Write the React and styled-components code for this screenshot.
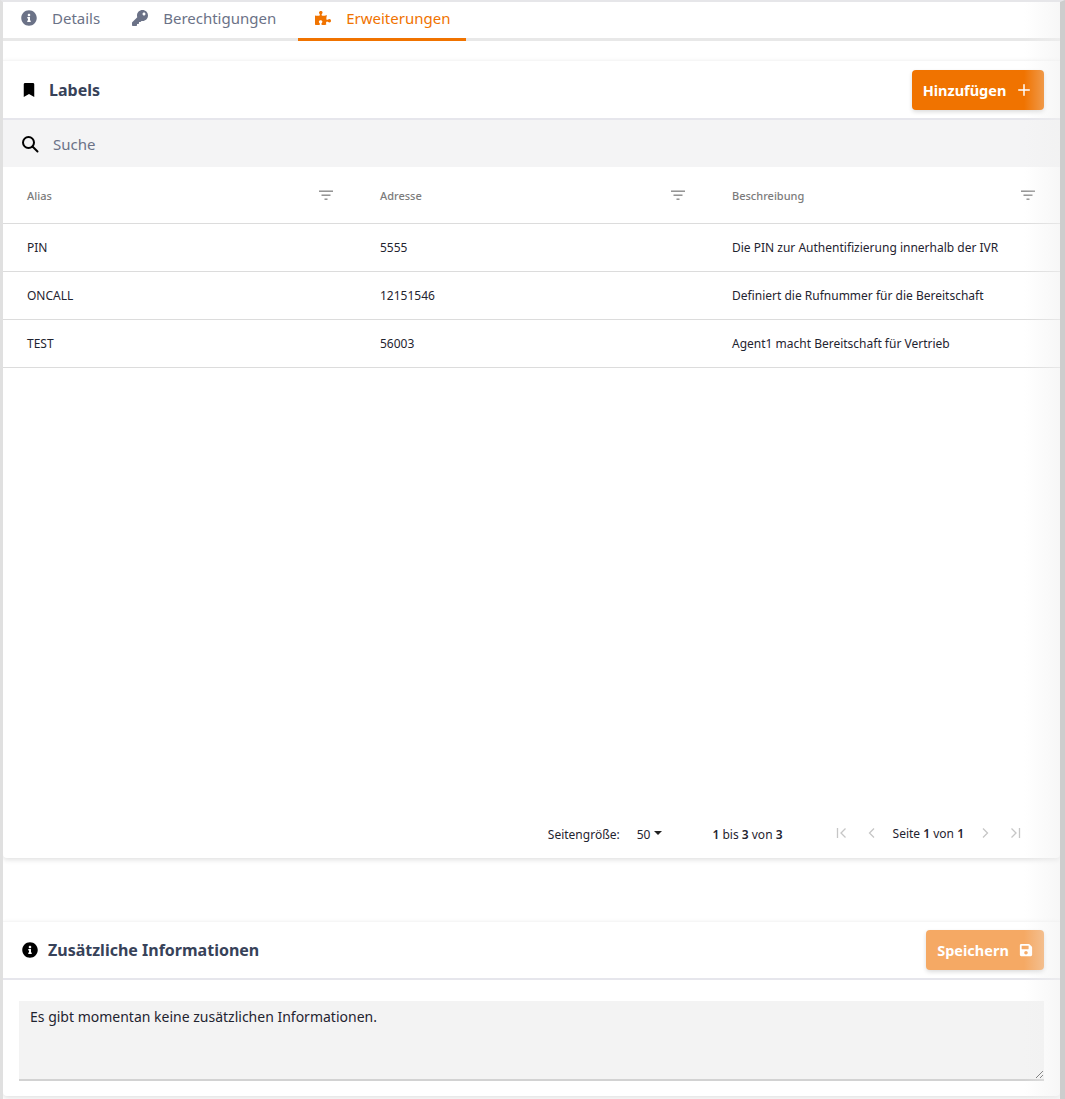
import React from 'react';
import styled, { createGlobalStyle } from 'styled-components';
import { FaInfoCircle, FaKey, FaPuzzlePiece, FaBookmark, FaSave } from 'react-icons/fa';
import { Plus } from 'lucide-react';

const GlobalStyle = createGlobalStyle`
    html, body {
        margin: 0;
        padding: 0;
        height: 1099px;
        overflow: hidden;
        background: #e6e6e9;
    }
    * { box-sizing: border-box; }
    body {
        font-family: "Noto Sans", "Open Sans", sans-serif;
        color: #1f2430;
    }
`;

const orange = '#f07300';

const rows = [
    { alias: 'PIN', address: '5555', text: 'Die PIN zur Authentifizierung innerhalb der IVR' },
    { alias: 'ONCALL', address: '12151546', text: 'Definiert die Rufnummer für die Bereitschaft' },
    { alias: 'TEST', address: '56003', text: 'Agent1 macht Bereitschaft für Vertrieb' },
];

const Page = styled.div`
    position: relative;
    width: 1065px;
    height: 1099px;
    padding: 2px 5px 0 3px;
    background: #fff;
    border-left: 3px solid #e0e0e0;
    border-right: 5px solid #cdcdcd;
    border-top: 2px solid #e6e6e9;
    padding: 0;
    overflow: hidden;
`;

const Fade = styled.div`
    position: absolute;
    top: 0;
    right: 0;
    bottom: 0;
    width: 36px;
    pointer-events: none;
    background: linear-gradient(to right, rgba(240, 240, 240, 0), rgba(240, 240, 240, 0.55));
`;

const Tabs = styled.nav`
    display: flex;
    height: 39px;
    padding-left: 8px;
    border-bottom: 3px solid #e8e8e8;
`;

const Tab = styled.div`
    display: flex;
    align-items: center;
    gap: 15px;
    height: 39px;
    padding: 0 16px 4px ${(p) => (p.$active ? '17px' : '10px')};
    margin-right: ${(p) => (p.$active ? '0' : '6px')};
    font-size: 15px;
    color: ${(p) => (p.$active ? orange : '#6b7287')};
    border-bottom: 3px solid ${(p) => (p.$active ? orange : 'transparent')};
    svg { width: 16px; height: 16px; }
`;

const Card = styled.section`
    display: flex;
    flex-direction: column;
    height: ${(p) => p.$height}px;
    margin-top: ${(p) => p.$top}px;
    border-top: 1px solid #f6f6f6;
    box-shadow: 0 2px 5px rgba(0, 0, 0, 0.12);
    background: #fff;
    border-radius: 0 0 4px 4px;
`;

const CardHeader = styled.header`
    display: flex;
    align-items: center;
    justify-content: space-between;
    flex: 0 0 ${(p) => p.$height}px;
    padding: 0 16px 0 19px;
    border-bottom: 2px solid #e6e6ec;
`;

const Title = styled.h2`
    display: flex;
    align-items: center;
    gap: ${(p) => p.$gap}px;
    margin: 0;
    font-size: 16px;
    font-weight: 700;
    color: #374259;
    svg { color: #000; flex: none; }
`;

const ActionButton = styled.button`
    display: flex;
    align-items: center;
    justify-content: center;
    gap: ${(p) => p.$gap}px;
    width: ${(p) => p.$width}px;
    height: 40px;
    padding: 0;
    border: 0;
    border-radius: 4px;
    font-family: inherit;
    font-size: 14.5px;
    font-weight: 700;
    color: #fff;
    background: ${(p) => (p.$muted ? '#f5a964' : orange)};
    box-shadow: 0 2px 4px rgba(0, 0, 0, 0.14);
`;

const SearchBar = styled.div`
    display: flex;
    align-items: center;
    gap: 14px;
    flex: 0 0 47px;
    padding: 0 0 0 18px;
    font-size: 15px;
    color: #6b7287;
    background: #f4f4f5;
`;

const Columns = styled.div`
    display: grid;
    grid-template-columns: 353px 352px 1fr;
`;

const HeaderRow = styled(Columns)`
    flex: 0 0 57px;
    align-items: center;
    padding-top: 1px;
    border-bottom: 1px solid #dcdcdc;
`;

const RowLine = styled(Columns)`
    flex: 0 0 48px;
    align-items: center;
    font-size: 12px;
    color: #1f2430;
    border-bottom: 1px solid #dcdcdc;
`;

const HeadCell = styled.div`
    display: flex;
    align-items: center;
    justify-content: space-between;
    padding: 0 ${(p) => p.$right}px 0 ${(p) => p.$left}px;
    font-size: 11px;
    font-weight: 500;
    color: #7b7b7b;
`;

const Cell = styled.div`
    padding-left: ${(p) => p.$left}px;
    white-space: nowrap;
`;

const Spacer = styled.div`
    flex: 1;
`;

const Pagination = styled.footer`
    display: flex;
    align-items: center;
    justify-content: flex-end;
    flex: 0 0 48px;
    padding: 0 30px 0 0;
    font-size: 12px;
    color: #1f2430;
`;

const PageSize = styled.span`
    display: flex;
    align-items: center;
    margin-right: 50px;
`;

const SizeValue = styled.span`
    display: flex;
    align-items: center;
    gap: 4px;
    margin-left: 17px;
    &::after {
        content: '';
        border-left: 4px solid transparent;
        border-right: 4px solid transparent;
        border-top: 4px solid #222;
        margin-top: -2px;
    }
`;

const Range = styled.span`
    margin-right: 44px;
`;

const PagerIcon = styled.svg`
    width: 12px;
    height: 12px;
    margin: 0 9px;
    fill: none;
    stroke: #c6c6c6;
    stroke-width: 1.3;
    position: relative;
    top: -1px;
`;

const PageLabel = styled.span`
    margin: -1px 6px 0 6px;
`;

const Strong = styled.span`
    font-weight: 600;
`;

const NotesBody = styled.div`
    padding: 21px 16px 0;
`;

const Notes = styled.textarea`
    display: block;
    width: 100%;
    height: 80px;
    padding: 6px 11px;
    border: 0;
    border-bottom: 2px solid #d2d2d2;
    outline: 0;
    font-family: inherit;
    font-size: 14px;
    color: #1f2430;
    background: #f3f3f3;
`;

const FilterIcon = () => (
    <svg width="14" height="12" viewBox="0 0 14 12" fill="#8a8a8a">
        <rect x="0" y="0.5" width="14" height="1.4" />
        <rect x="2.5" y="4.5" width="9" height="1.4" />
        <rect x="5.5" y="8.5" width="3" height="1.4" />
    </svg>
);

const SearchIcon = () => (
    <svg width="18" height="18" viewBox="0 0 18 18" fill="none" stroke="#000" strokeWidth="2">
        <circle cx="7.5" cy="7.5" r="5.5" />
        <path d="M11.5 11.5L16.5 16.5" strokeLinecap="round" />
    </svg>
);

const FirstIcon = () => (
    <PagerIcon viewBox="0 0 12 12"><path d="M1.5 1v10M9.5 1.5L5 6l4.5 4.5" /></PagerIcon>
);
const PrevIcon = () => (
    <PagerIcon viewBox="0 0 12 12"><path d="M8 1.5L3.5 6 8 10.5" /></PagerIcon>
);
const NextIcon = () => (
    <PagerIcon viewBox="0 0 12 12"><path d="M4 1.5L8.5 6 4 10.5" /></PagerIcon>
);
const LastIcon = () => (
    <PagerIcon viewBox="0 0 12 12"><path d="M10.5 1v10M2.5 1.5L7 6l-4.5 4.5" /></PagerIcon>
);

const App = () => {
    return (<Page>
        <GlobalStyle />
        <Tabs>
            <Tab><FaInfoCircle />Details</Tab>
            <Tab><FaKey />Berechtigungen</Tab>
            <Tab $active><FaPuzzlePiece />Erweiterungen</Tab>
        </Tabs>

        <Card $top={19} $height={798}>
            <CardHeader $height={59}>
                <Title $gap={13}><FaBookmark size={14} />Labels</Title>
                <ActionButton $width={132} $gap={9}>Hinzufügen<Plus size={18} /></ActionButton>
            </CardHeader>
            <SearchBar><SearchIcon />Suche</SearchBar>
            <HeaderRow>
                <HeadCell $left={24} $right={23}>Alias<FilterIcon /></HeadCell>
                <HeadCell $left={24} $right={23}>Adresse<FilterIcon /></HeadCell>
                <HeadCell $left={24} $right={25}>Beschreibung<FilterIcon /></HeadCell>
            </HeaderRow>
            {rows.map((row) => (
                <RowLine key={row.alias}>
                    <Cell $left={24}>{row.alias}</Cell>
                    <Cell $left={24}>{row.address}</Cell>
                    <Cell $left={24}>{row.text}</Cell>
                </RowLine>
            ))}
            <Spacer />
            <Pagination>
                <PageSize>Seitengröße:<SizeValue>50</SizeValue></PageSize>
                <Range><Strong>1</Strong> bis <Strong>3</Strong> von <Strong>3</Strong></Range>
                <FirstIcon />
                <PrevIcon />
                <PageLabel>Seite <Strong>1</Strong> von <Strong>1</Strong></PageLabel>
                <NextIcon />
                <LastIcon />
            </Pagination>
        </Card>

        <Card $top={63} $height={175}>
            <CardHeader $height={58}>
                <Title $gap={10}><FaInfoCircle size={16} />Zusätzliche Informationen</Title>
                <ActionButton $muted $width={118} $gap={10}>Speichern<FaSave size={14} /></ActionButton>
            </CardHeader>
            <NotesBody>
                <Notes defaultValue="Es gibt momentan keine zusätzlichen Informationen." />
            </NotesBody>
        </Card>
        <Fade />
    </Page>);
};

export default App;
